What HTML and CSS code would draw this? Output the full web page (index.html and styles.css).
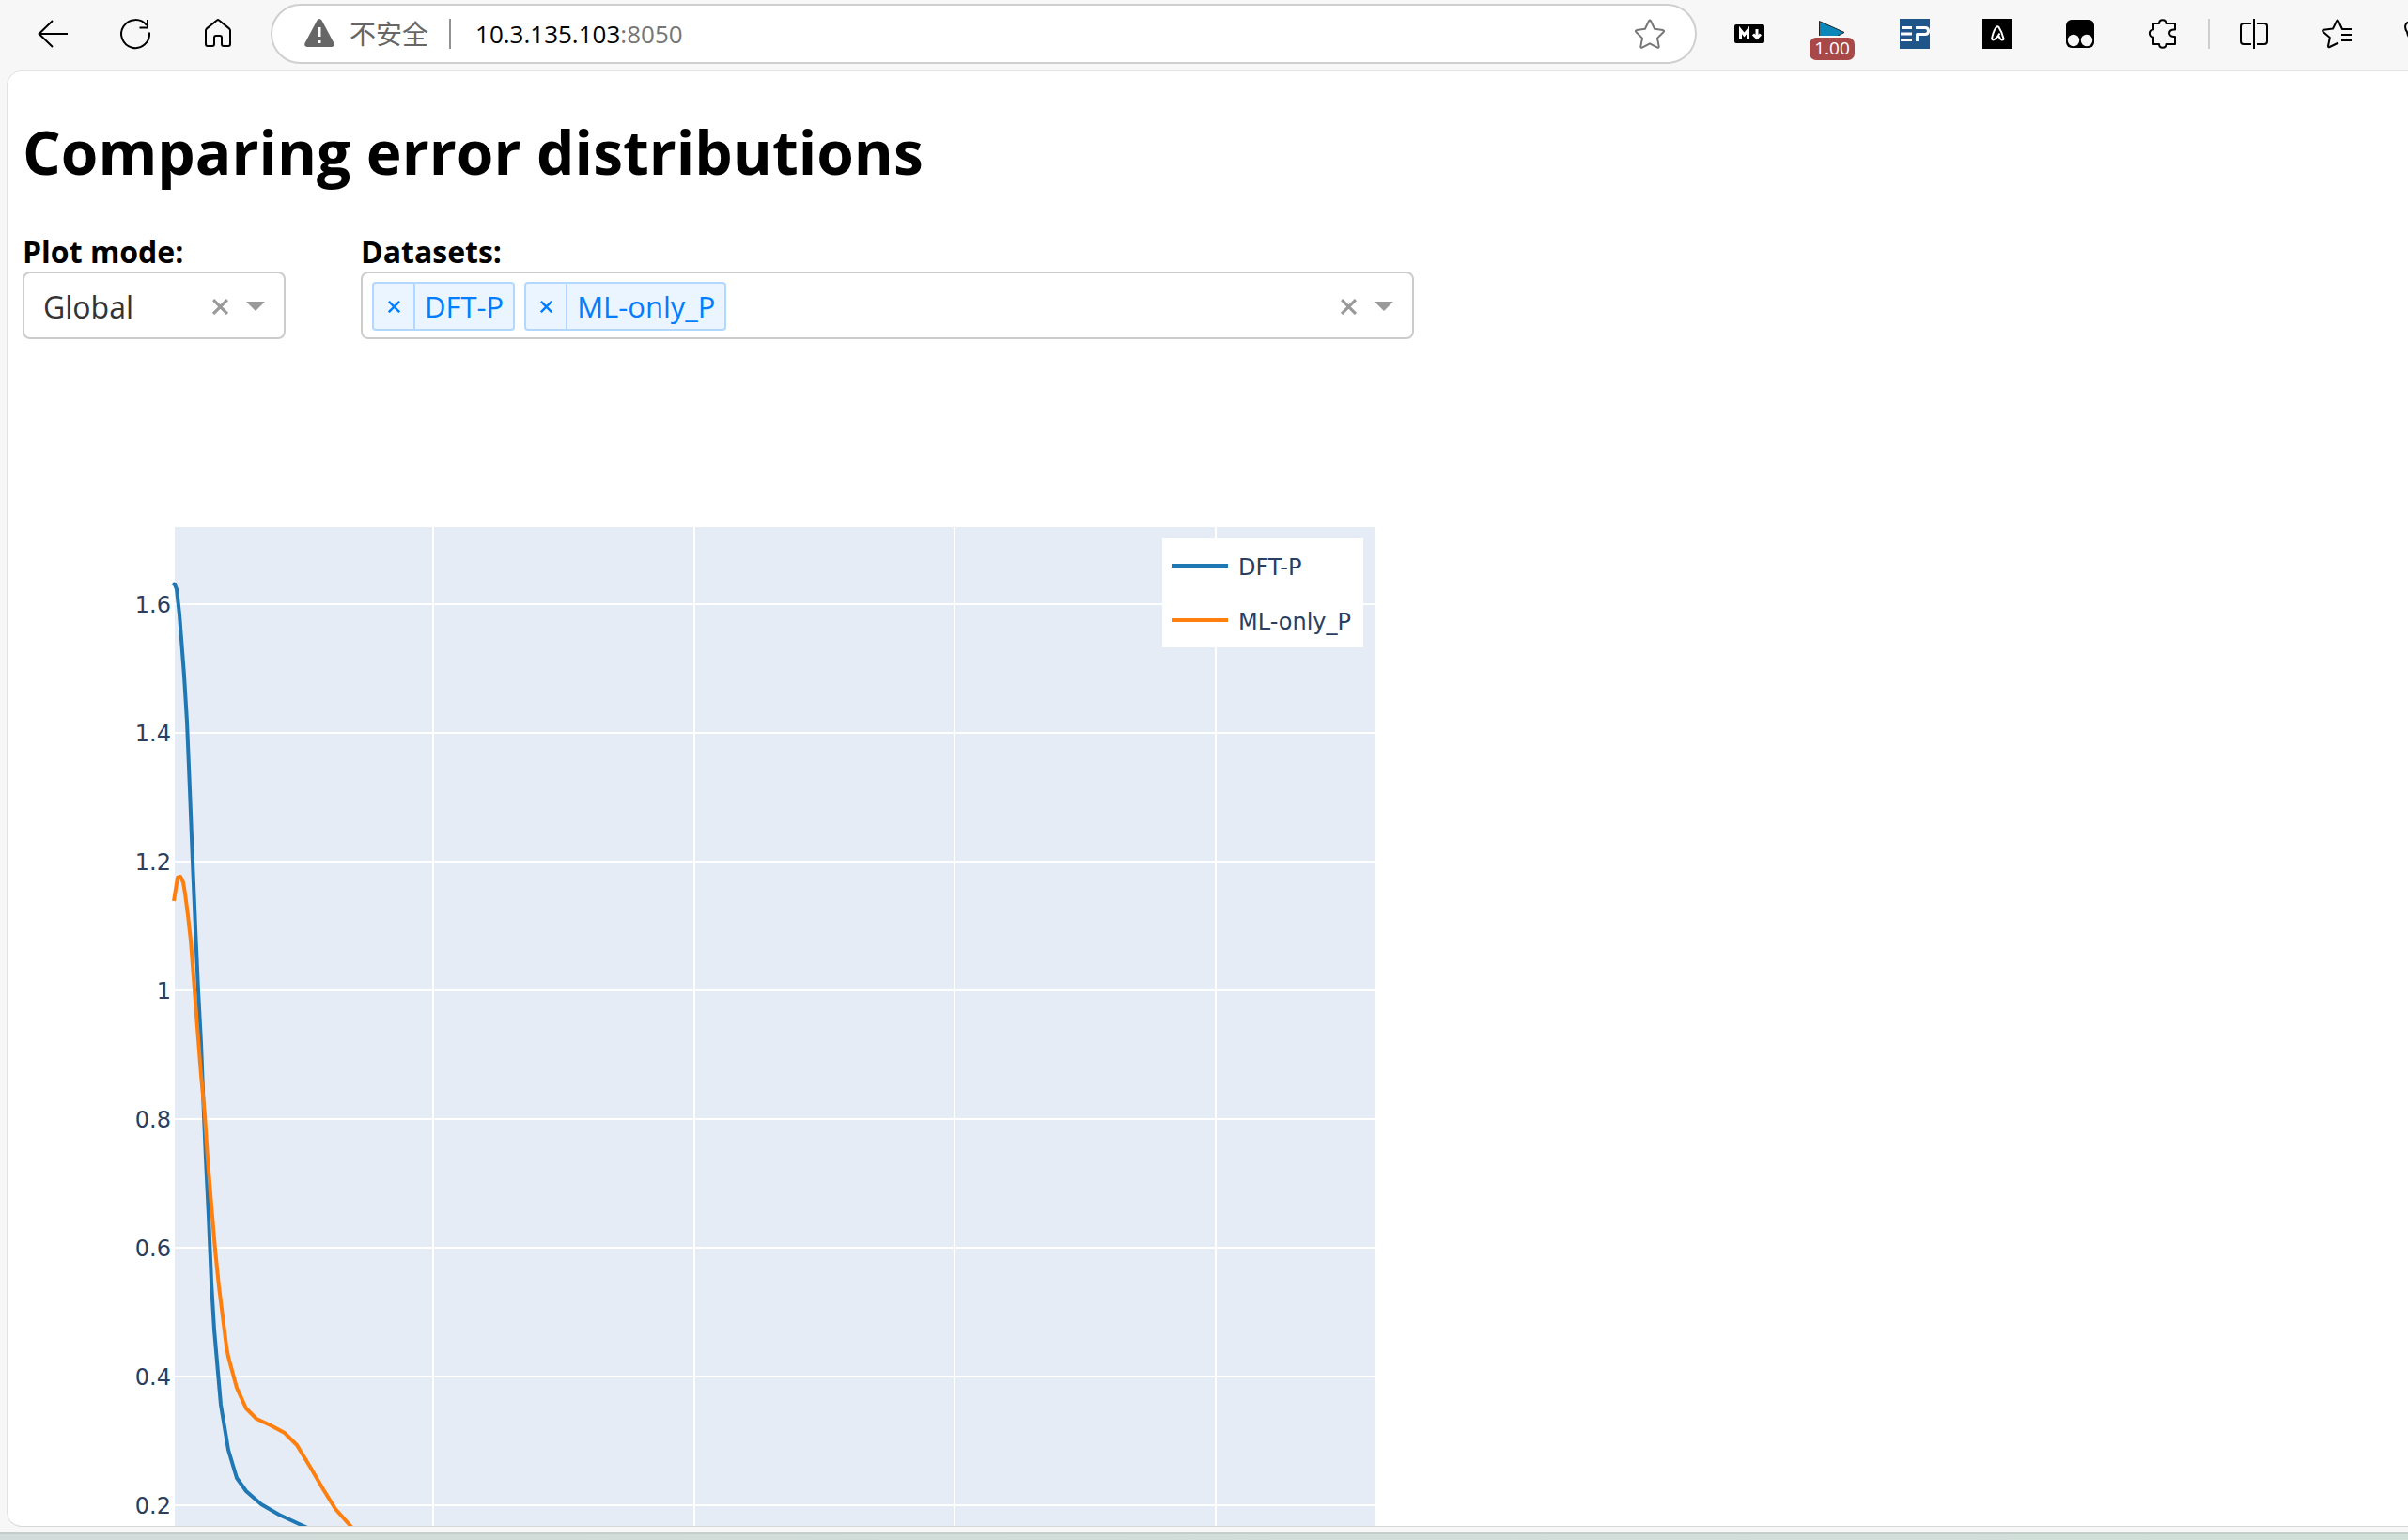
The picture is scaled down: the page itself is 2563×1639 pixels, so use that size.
FILE: index.html
```html
<!DOCTYPE html>
<html lang="en">
<head>
<meta charset="utf-8">
<title>Comparing error distributions</title>
<link rel="stylesheet" href="styles.css">
</head>
<body>
<div class="window">
  <header class="toolbar">
    <button class="tool" aria-label="Back"><svg class="icon" viewBox="0 0 32 32"><path d="M32 16H1.500M16 2L1.500 16l14.500 14"/></svg></button>
    <button class="tool" aria-label="Refresh"><svg class="icon" viewBox="0 0 32 32"><path d="M31 14.500A15 15 0 1 1 28 7"/><path d="M29 1v8.500h-8.500"/></svg></button>
    <button class="tool" aria-label="Home"><svg class="icon" viewBox="0 0 32 32"><path d="M3 12.500Q3 11.300 4 10.400L15 1.500q1-.8 2 0L28 10.400q1 .9 1 2.100V27q0 2-2 2h-5q-2 0-2-2v-7q0-2-2-2h-4q-2 0-2 2v7q0 2-2 2H5q-2 0-2-2z"/></svg></button>
    <div class="address">
      <svg class="icon warn" viewBox="0 0 32 32"><path class="fill" d="M13.400 1.700q2.600-3.400 5.200 0L31.500 26q1.200 3.500-2.500 4H3q-3.700-.5-2.500-4z"/><path class="mark" d="M16 9v10M16 23v3"/></svg>
      <span class="insecure">不安全</span>
      <span class="address-rule"></span>
      <span class="url">10.3.135.103<span class="port">:8050</span></span>
      <button class="favorite" aria-label="Add to favorites"><svg class="icon" viewBox="0 0 32 32"><path d="M15 2.300q1-1.800 2 0l4.100 8.500 8.900 1.300q1.800.5.700 1.900L24 20.600l1.700 9q0 1.700-1.600 1L16 26.300l-8.100 4.300q-1.600.7-1.600-1l1.700-9L1.300 14q-1.100-1.400.7-1.900l8.900-1.300z"/></svg></button>
    </div>
    <button class="tool" aria-label="Markdown"><svg class="icon" viewBox="0 0 32 32"><rect width="32" height="20" y="6" rx="2" class="black"/><path class="thick" d="M6.500 21v-9l4 5 4-5v9M24 11v9M20 16.500l4 4 4-4"/></svg></button>
    <button class="tool speed" aria-label="Playback speed"><svg class="icon" viewBox="0 0 32 32"><path d="M2.500 2.500v26L29 14.500z" class="play"/></svg><span class="badge">1.00</span></button>
    <button class="tool" aria-label="EP"><svg class="icon" viewBox="0 0 32 32"><path fill="#20558a" stroke="none" d="M0 0h32v32H0z"/><path class="ep" d="M2 9.500h11M1 16h12M1 22.500h12M17 9.500h10q3.500 0 3.500 3.500t-3.500 3.500h-8.500V24"/></svg></button>
    <button class="tool" aria-label="Assistant"><svg class="icon" viewBox="0 0 32 32"><path class="black" d="M0 0h32v32H0z"/><path class="thin" d="M11.500 22.500c-1.500 0-1.500-2-1-3.500 1-4 3-9 5-10.500q1-.5 2 .5c2 3 4 8 5 12q0 1.500-1.500 1.500c-2 0-3-3-4-5M11.500 22.500q3.500-1 7-7"/></svg></button>
    <button class="tool" aria-label="Userscripts"><svg class="icon" viewBox="0 0 32 32"><rect x="1" y="1" width="30" height="30" rx="6" class="black"/><circle cx="9" cy="23" r="6.200" class="eye"/><circle cx="23" cy="23" r="6.200" class="eye"/></svg></button>
    <button class="tool" aria-label="Extensions"><svg class="icon" viewBox="0 0 32 32"><path d="M6 5h6c0-5 7.500-5 7.500 0H29v6.500c-8-1-8 8.500 0 7.500V27h-9.500c0 5-7.500 5-7.500 0H6v-7.500c-5.500 0-5.500-8 0-8z"/></svg></button>
    <span class="toolbar-rule"></span>
    <button class="tool" aria-label="Split screen"><svg class="icon" viewBox="0 0 32 32"><path d="M13 5H5Q2 5 2 8v16q0 3 3 3h8M19 5h8q3 0 3 3v16q0 3-3 3h-8M16 0v32"/></svg></button>
    <button class="tool" aria-label="Favorites"><svg class="icon" viewBox="0 0 32 32"><path d="M32 11H22L18 2.500q-1-1.800-2 0L12 10.500l-9.800 1.200q-1.800.6-.7 2L8.800 20 7 29q0 1.700 1.600 1L18 25.500M21 17h11M21 23h11"/></svg></button>
    <button class="tool" aria-label="Browser essentials"><svg class="icon" viewBox="0 0 32 32"><path d="M16 30Q4 22 3 14C-1 8 2 3 6 4q6 0 10 4c8-9 19 2 12 10z"/></svg></button>
  </header>

  <main class="page">
    <h1 class="title">Comparing error distributions</h1>
    <div class="controls">
      <div class="field field-mode">
        <label class="label" for="mode">Plot mode:</label>
        <div class="box">
          <select class="select" id="mode"><option>Global</option></select>
          <button class="clear" aria-label="Clear plot mode"><svg class="cross" viewBox="0 0 16 16"><path d="M1 1l14 14M15 1L1 15"/></svg></button>
          <span class="arrow"></span>
        </div>
      </div>
      <div class="field field-data">
        <label class="label" for="datasets">Datasets:</label>
        <div class="box">
          <span class="tag"><button class="remove" aria-label="Remove DFT-P"><svg class="cross small" viewBox="0 0 16 16"><path d="M1 1l14 14M15 1L1 15"/></svg></button><span class="tag-text">DFT-P</span></span>
          <span class="tag"><button class="remove" aria-label="Remove ML-only_P"><svg class="cross small" viewBox="0 0 16 16"><path d="M1 1l14 14M15 1L1 15"/></svg></button><span class="tag-text">ML-only_P</span></span>
          <input class="search" id="datasets" type="text">
          <button class="clear" aria-label="Clear datasets"><svg class="cross" viewBox="0 0 16 16"><path d="M1 1l14 14M15 1L1 15"/></svg></button>
          <span class="arrow"></span>
        </div>
      </div>
    </div>

    <svg class="chart" viewBox="24 361 1481 1264" role="img" aria-label="Error distribution curves">
      <rect class="plot" x="186" y="561" width="1278" height="1080"/>
      <path class="grid" d="M461 561v1080M739 561v1080M1016 561v1080M1294 561v1080M186 643h1278M186 780h1278M186 917h1278M186 1054h1278M186 1191h1278M186 1328h1278M186 1465h1278M186 1602h1278"/>
      <polyline class="curve dft" points="184,621 186,622 188,627 191,654 193,680 196,719 199,768 202,840 205,917 208,988 211,1054 214,1110 217,1187 219,1233 222,1294 225,1365 228,1415 233,1472 235,1495 243,1543 252,1573 262,1587 278,1601 297,1612 325,1625 345,1634"/>
      <polyline class="curve ml" points="185,959 189,934 192,933 195,939 197,951 200,974 203,1001 206,1040 209,1080 214,1144 218,1187 221,1233 225,1283 229,1330 233,1369 237,1401 241,1433 243,1444 252,1477 262,1499 273,1510 288,1517 303,1525 316,1538 330,1561 344,1585 357,1606 374,1625 382,1634"/>
      <g class="ticks">
        <text x="182" y="652">1.6</text>
        <text x="182" y="789">1.4</text>
        <text x="182" y="926">1.2</text>
        <text x="182" y="1063">1</text>
        <text x="182" y="1200">0.8</text>
        <text x="182" y="1337">0.6</text>
        <text x="182" y="1474">0.4</text>
        <text x="182" y="1611">0.2</text>
      </g>
      <rect class="legend" x="1237" y="573" width="214" height="116"/>
      <path class="curve dft" d="M1247 602h60"/>
      <path class="curve ml" d="M1247 660h60"/>
      <text class="legend-text" x="1318" y="612">DFT-P</text>
      <text class="legend-text" x="1318" y="670">ML-only_P</text>
    </svg>
  </main>
  <div class="desktop"></div>
</div>
</body>
</html>
```
FILE: styles.css
```css
* {
  box-sizing: border-box;
}

body {
  margin: 0;
  font-family: "Open Sans", "Noto Sans CJK SC", sans-serif;
  color: #000;
}

button {
  padding: 0;
  border: 0;
  background: none;
  font: inherit;
}

.window {
  display: flex;
  flex-direction: column;
  height: 100vh;
  overflow: hidden;
  background: #f7f7f7;
}

/* Browser toolbar */
.toolbar {
  display: flex;
  flex: none;
  align-items: center;
  height: 72px;
  margin-right: -56px;
  padding-left: 12px;
}

.tool {
  display: flex;
  position: relative;
  flex: none;
  align-items: center;
  justify-content: center;
  width: 88px;
  height: 72px;
}

.icon {
  display: block;
  flex: none;
  width: 32px;
  height: 32px;
  overflow: visible;
  fill: none;
  stroke: #000;
  stroke-width: 2;
  stroke-linejoin: round;
}

.icon .black { fill: #000; stroke: none; }
.icon .eye { fill: #f7f7f7; stroke: none; }
.icon .thick { stroke: #fff; stroke-width: 3; stroke-linejoin: miter; }
.icon .thin { stroke: #fff; stroke-width: 2; }
.icon .ep { stroke: #fff; stroke-width: 3; }
.icon .play { fill: #0a87b8; stroke: #222; stroke-width: 1; }
.icon .fill { fill: #666; stroke: none; }
.icon .mark { stroke: #fff; stroke-width: 3; }

.badge {
  position: absolute;
  top: 40px;
  left: 20px;
  width: 48px;
  height: 24px;
  border-radius: 7px;
  background: #a84848;
  color: #fff;
  font-size: 19px;
  line-height: 23px;
  text-align: center;
}

.speed .icon {
  clip-path: inset(0 0 14px 0);
}

.address {
  display: flex;
  flex: 1;
  align-items: center;
  height: 64px;
  margin: 0 12px;
  padding: 0 32px 0 34px;
  border: 2px solid #cfcfcf;
  border-radius: 32px;
  background: #fff;
}

.insecure {
  margin-left: 16px;
  color: #666;
  font-size: 28px;
  line-height: 40px;
}

.address-rule {
  width: 2px;
  height: 32px;
  margin: 0 26px 0 22px;
  background: #929292;
}

.url {
  flex: 1;
  font-size: 26px;
  line-height: 40px;
}

.port {
  color: #767676;
}

.favorite .icon {
  stroke: #767676;
}

.toolbar-rule {
  flex: none;
  width: 2px;
  height: 32px;
  margin: 0 3px 0 4px;
  background: #cfcfcf;
}

/* Page */
.page {
  flex: 1;
  min-height: 0;
  margin: 3px -24px 6px 7px;
  padding: 0 16px;
  overflow: hidden;
  border: 1px solid #e2e2e2;
  border-bottom-color: #d8d8d8;
  border-radius: 16px;
  background: #fff;
}

.desktop {
  flex: none;
  height: 8px;
  border-top: 2px solid #c2cec9;
  background: linear-gradient(90deg, #d2dcda, #d1dfd9);
}

.title {
  margin: 42px 0 41px;
  font-size: 64px;
  font-weight: 700;
  line-height: 88px;
}

.controls {
  display: flex;
  gap: 80px;
  max-width: 1481px;
}

.field {
  display: flex;
  flex-direction: column;
}

.field-mode {
  flex: none;
  width: 280px;
}

.field-data {
  flex: 1;
}

.label {
  font-size: 32px;
  font-weight: 700;
  line-height: 42px;
}

.box {
  display: flex;
  align-items: center;
  height: 72px;
  padding: 2px 20px 0 10px;
  border: 2px solid #ccc;
  border-radius: 8px;
}

.select,
.search {
  flex: 1;
  min-width: 0;
  height: 60px;
  padding: 0 0 0 10px;
  appearance: none;
  border: 0;
  outline: 0;
  background: none;
  color: #333;
  font: 32px "Open Sans", sans-serif;
}

.cross {
  display: block;
  width: 17px;
  height: 17px;
  fill: none;
  stroke: #999;
  stroke-width: 3;
}

.cross.small {
  width: 13px;
  height: 13px;
  stroke: #007eff;
}

.arrow {
  margin-left: 19px;
  border: 10px solid transparent;
  border-top-color: #999;
  border-bottom-width: 0;
}

.tag {
  display: flex;
  height: 52px;
  margin-right: 10px;
  border: 2px solid #b3d8ff;
  border-radius: 4px;
  background: #ebf5ff;
  color: #007eff;
  font-size: 31px;
  line-height: 48px;
}

.remove {
  display: flex;
  align-items: center;
  justify-content: center;
  width: 44px;
  border-right: 2px solid #b3d8ff;
}

.tag-text {
  padding: 0 10px;
}

/* Chart */
.chart {
  display: block;
  width: 100%;
  max-width: 1481px;
}

.plot { fill: #e5ecf6; }
.grid { fill: none; stroke: #fff; stroke-width: 2; }
.curve { fill: none; stroke-width: 4; stroke-linejoin: round; }
.dft { stroke: #1f77b4; }
.ml { stroke: #ff7f0e; }
.legend { fill: #fff; }

.ticks,
.legend-text {
  fill: #2a3f5f;
  font-family: "DejaVu Sans", sans-serif;
  font-size: 24px;
}

.ticks {
  text-anchor: end;
}
```
